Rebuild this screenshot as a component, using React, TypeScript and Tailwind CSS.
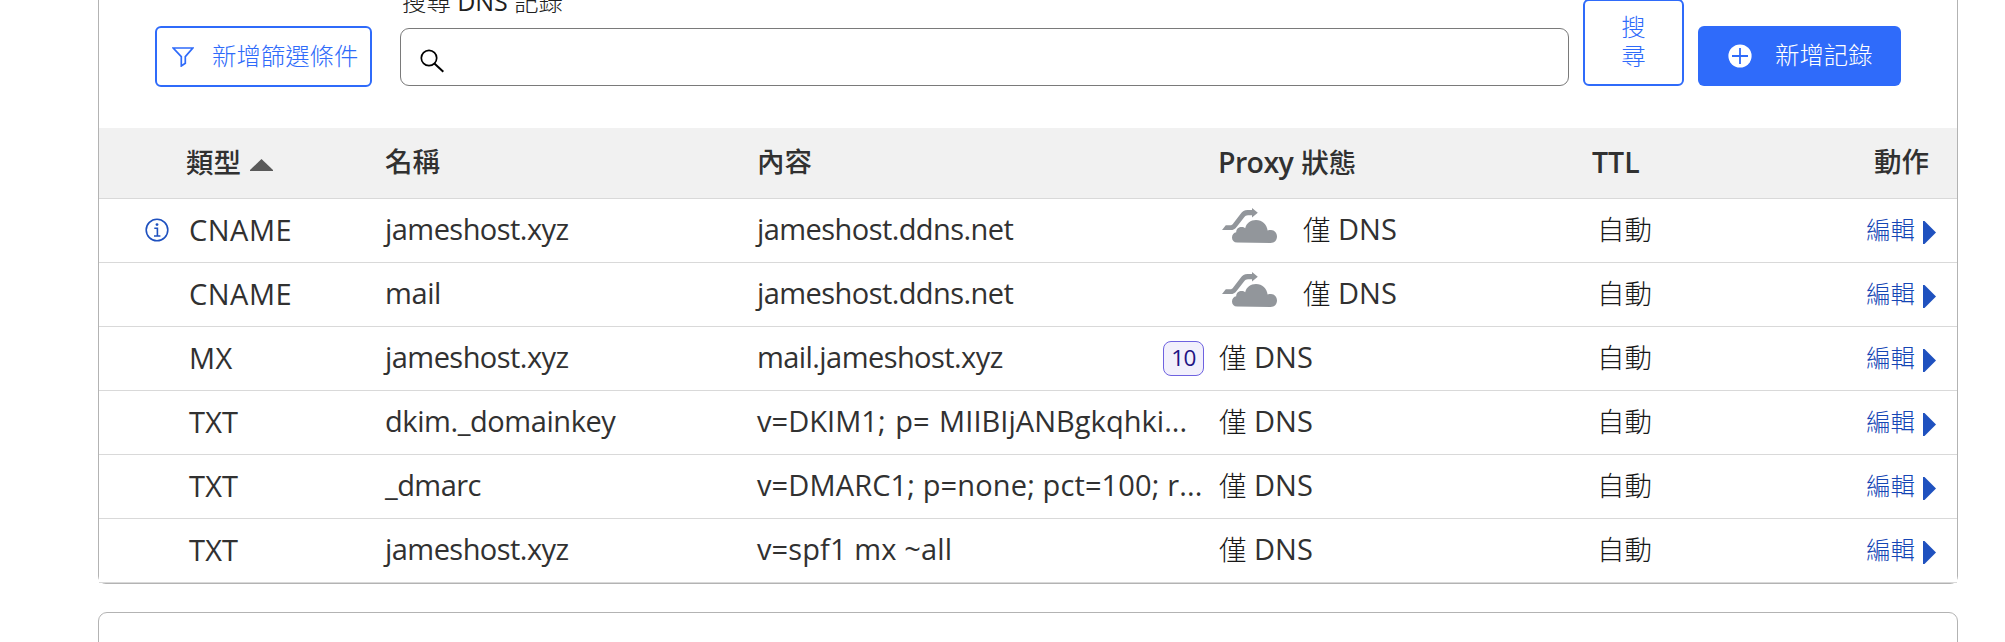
import React from "react";

type RecordRow = {
  type: string;
  typeClass: string;
  name: string;
  content: string;
  nameClass: string;
  contentClass: string;
  info?: boolean;
  proxied?: boolean;
  priority?: string;
};

const rows: RecordRow[] = [
  { type: "CNAME", typeClass: "tracking-[0.5px]", name: "jameshost.xyz", nameClass: "tracking-[-0.55px]", content: "jameshost.ddns.net", contentClass: "tracking-[-0.57px]", info: true, proxied: true },
  { type: "CNAME", typeClass: "tracking-[0.5px]", name: "mail", nameClass: "tracking-[-0.4px]", content: "jameshost.ddns.net", contentClass: "tracking-[-0.57px]", proxied: true },
  { type: "MX", typeClass: "tracking-[0.5px]", name: "jameshost.xyz", nameClass: "tracking-[-0.55px]", content: "mail.jameshost.xyz", contentClass: "tracking-[-0.57px]", priority: "10" },
  { type: "TXT", typeClass: "tracking-[0.2px]", name: "dkim._domainkey", nameClass: "tracking-[-0.42px]", content: "v=DKIM1; p= MIIBIjANBgkqhki...", contentClass: "tracking-[0.04px] [word-spacing:2px]" },
  { type: "TXT", typeClass: "tracking-[0.2px]", name: "_dmarc", nameClass: "tracking-[-0.55px]", content: "v=DMARC1; p=none; pct=100; r...", contentClass: "tracking-[0.13px]" },
  { type: "TXT", typeClass: "tracking-[0.2px]", name: "jameshost.xyz", nameClass: "tracking-[-0.55px]", content: "v=spf1 mx ~all", contentClass: "tracking-[0.12px]" },
];

const columns = "grid grid-cols-[88px_198px_373px_460px_374px_1fr]";

function FilterIcon() {
  return (
    <svg className="h-[20px] w-[22px] shrink-0" viewBox="0 0 22 20" fill="none" stroke="currentColor" strokeWidth="1.7">
      <path d="M1.2 1H20.8L13.3 9.6V16.2L9.3 19V9.6Z" />
    </svg>
  );
}

function SearchIcon() {
  return (
    <svg className="h-[24px] w-[24px]" viewBox="0 0 24 24" fill="none" stroke="#000" strokeWidth="1.7">
      <circle cx="9" cy="9" r="7.7" />
      <path d="M14.4 14.4L23.3 22.8" strokeWidth="2" />
    </svg>
  );
}

function PlusIcon() {
  return (
    <svg className="h-[24px] w-[24px]" viewBox="0 0 24 24">
      <circle cx="12" cy="12" r="11.6" fill="#fff" />
      <path d="M12 4V20M4 12H20" stroke="#2f6bfa" strokeWidth="1.8" />
    </svg>
  );
}

function InfoIcon() {
  return (
    <svg className="-mt-px h-[24px] w-[24px]" viewBox="0 0 24 24" fill="none" stroke="#1f51bf" strokeWidth="1.6">
      <circle cx="12" cy="12" r="10.8" />
      <path d="M9.3 10.2H12.4V18M9 18H15.4" />
      <circle cx="12" cy="6.6" r="1.4" fill="#1f51bf" stroke="none" />
    </svg>
  );
}

function CloudIcon() {
  return (
    <svg className="h-[35px] w-[56px]" viewBox="0 0 56 35" fill="#92969b">
      <path d="M0 22L3.8 17.3H8C9.6 17.3 10.4 16.5 11.4 15.2L18.5 6C20.4 3.4 22.3 2 25.6 2H30V0L35.8 4.8L30 9.6V7.2H26C24.2 7.2 23.2 8 22 9.5L15 18.4C13 21 11.4 22 8.4 22Z" />
      <path d="M15.2 34.6C11.8 34.4 10 32.2 10 29.4C10 26.6 11.9 24.8 14.2 24.3C14.2 20.8 16.8 19 19.6 19C21.2 19 22.3 19.5 23.2 20.3C24.3 15 28.6 11.9 34 11.9C40.3 11.9 44.8 16.3 45.6 22.5C46.6 22.2 47.9 22.1 49 22.1C52.6 22.3 55 25 55 28.5C55 32.2 52.4 35 48.6 35Z" />
    </svg>
  );
}

export default function App() {
  return (
    <div className="h-[642px] w-[2005px] overflow-hidden bg-white pl-[98px] font-['Open_Sans','Noto_Sans_CJK_TC',sans-serif] text-[29px] text-[#313131]">
      <section className="h-[584px] w-[1860px] rounded-b-[8px] border border-t-0 border-[#b3b3b3]">
        <div className="flex h-[128px] items-end pb-[42px] pl-[56px] text-[24.4px] font-light text-[#2f6bfa]">
          <button className="-mb-px flex h-[61px] w-[217px] items-center rounded-[6px] border-2 border-[#2f6bfa] pl-[15px] whitespace-nowrap">
            <FilterIcon />
            <span className="ml-[18px] -mt-px">新增篩選條件</span>
          </button>
          <div className="ml-[28px] w-[1169px]">
            <div className="mb-[8px] h-[34px] pl-[2px] leading-[30px] text-[#202020]">
              搜尋 <span className="text-[25px] font-normal">DNS</span> 記錄
            </div>
            <div className="flex h-[58px] items-center rounded-[9px] border border-[#7a7a7a] pt-[7px] pl-[19px]">
              <SearchIcon />
            </div>
          </div>
          <button className="ml-[14px] flex h-[87px] w-[101px] flex-col items-center justify-center rounded-[6px] border-2 border-[#2f6bfa] pb-[4px] leading-[29px]">
            <span>搜</span>
            <span>尋</span>
          </button>
          <button className="ml-[14px] flex h-[60px] w-[203px] items-center rounded-[6px] bg-[#2f6bfa] pl-[30px] whitespace-nowrap text-white">
            <PlusIcon />
            <span className="ml-[23px] -mt-[2px]">新增記錄</span>
          </button>
        </div>
        <div className={`${columns} h-[71px] border-b border-[#d9d9d9] bg-[#f1f1f1] text-[27.5px] leading-[68px] font-semibold`}>
          <span />
          <span className="-ml-px flex items-center font-medium">
            類型
            <svg className="mt-[4px] ml-[9px] h-[12px] w-[23px]" viewBox="0 0 23 12" fill="#595959">
              <path d="M0 12V11L11.5 0L23 11V12Z" />
            </svg>
          </span>
          <span className="font-medium">名稱</span>
          <span className="-ml-px font-medium">內容</span>
          <span>
            <span className="text-[28.5px] tracking-[-0.6px]">Proxy</span>{" "}
            <span className="ml-px font-medium">狀態</span>
          </span>
          <span className="flex justify-between pr-[28px]">
            <span className="text-[28.5px]">TTL</span>
            <span className="font-medium">動作</span>
          </span>
        </div>
        {rows.map((r, i) => (
          <div key={i} className={`${columns} h-[64px] border-b border-[#d9d9d9] bg-white leading-[59px] whitespace-nowrap`}>
            <span className="flex items-center pl-[46px]">{r.info && <InfoIcon />}</span>
            <span className={`pt-px pl-[2px] ${r.typeClass}`}>{r.type}</span>
            <span className={r.nameClass}>{r.name}</span>
            <span className="flex justify-between">
              <span className={`-ml-px ${r.contentClass}`}>{r.content}</span>
              {r.priority && (
                <span className="mt-[14px] mr-[14px] flex h-[35px] w-[41px] items-center justify-center rounded-[8px] border border-[#6e62e0] bg-[#f2f0fc] text-[22.5px] leading-none font-medium tracking-[-0.5px] text-[#1f1483]">
                  {r.priority}
                </span>
              )}
            </span>
            <span className="flex pl-px">
              {r.proxied && (
                <span className="mt-[9px] mr-[25px] ml-[3px] h-[35px]">
                  <CloudIcon />
                </span>
              )}
              <span>
                <span className="text-[27.5px] font-light text-[#181818]">僅</span> DNS
              </span>
            </span>
            <span className="flex justify-between pl-[5px]">
              <span className="pt-px text-[27.5px] font-light text-[#181818]">自動</span>
              <span className="flex h-[63px] items-center pr-[21px] text-[24.4px] font-light text-[#1546b5]">
                <span className="-mt-[2px]">編輯</span>
                <svg className="mt-[3px] ml-[8px] h-[23px] w-[13px]" viewBox="0 0 13 23" fill="#1f51bf">
                  <path d="M0 0H1.5L13 11.5L1.5 23H0Z" />
                </svg>
              </span>
            </span>
          </div>
        ))}
      </section>
      <section className="mt-[28px] h-[80px] w-[1860px] rounded-t-[9px] border border-[#b3b3b3]" />
    </div>
  );
}
